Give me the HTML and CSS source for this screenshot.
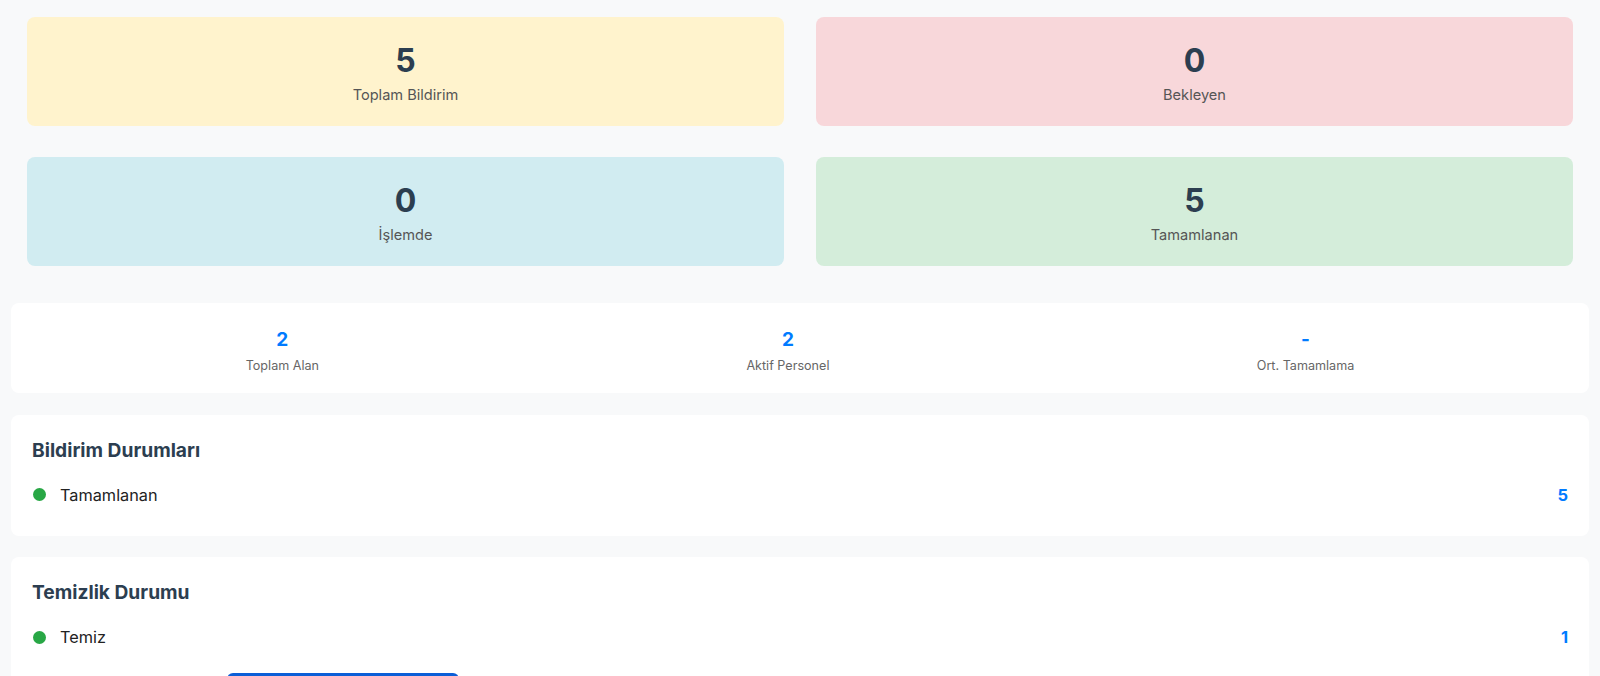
FILE: index.html
```html
<!DOCTYPE html>
<html lang="tr">
<head>
<meta charset="utf-8">
<title>Raporlar</title>
<link rel="stylesheet" href="styles.css">
</head>
<body>
<main class="page">
  <section class="stat-grid">
    <div class="stat-card yellow">
      <div class="stat-num">5</div>
      <div class="stat-label">Toplam Bildirim</div>
    </div>
    <div class="stat-card pink">
      <div class="stat-num">0</div>
      <div class="stat-label">Bekleyen</div>
    </div>
    <div class="stat-card cyan">
      <div class="stat-num">0</div>
      <div class="stat-label">İşlemde</div>
    </div>
    <div class="stat-card green">
      <div class="stat-num">5</div>
      <div class="stat-label">Tamamlanan</div>
    </div>
  </section>

  <section class="panel summary">
    <div class="summary-item">
      <div class="summary-num">2</div>
      <div class="summary-label">Toplam Alan</div>
    </div>
    <div class="summary-item">
      <div class="summary-num">2</div>
      <div class="summary-label">Aktif Personel</div>
    </div>
    <div class="summary-item">
      <div class="summary-num">-</div>
      <div class="summary-label">Ort. Tamamlama</div>
    </div>
  </section>

  <section class="panel list-panel">
    <h3 class="panel-title">Bildirim Durumları</h3>
    <div class="status-row">
      <span class="dot"></span>
      <span class="status-name">Tamamlanan</span>
      <span class="status-count">5</span>
    </div>
  </section>

  <section class="panel list-panel">
    <h3 class="panel-title">Temizlik Durumu</h3>
    <div class="status-row">
      <span class="dot"></span>
      <span class="status-name">Temiz</span>
      <span class="status-count">1</span>
    </div>
    <div class="action-btn"></div>
  </section>
</main>
</body>
</html>
```

FILE: styles.css
```css
* {
  box-sizing: border-box;
}

html, body {
  margin: 0;
  padding: 0;
  background: #f8f9fa;
  font-family: Inter, "Noto Sans", "Liberation Sans", sans-serif;
  overflow: hidden;
}

.page {
  padding: 17px 11px 0;
}

.stat-grid {
  display: grid;
  grid-template-columns: 1fr 1fr;
  column-gap: 32px;
  row-gap: 31px;
  padding: 0 16px;
  margin-bottom: 37px;
}

.stat-card {
  border-radius: 8px;
  padding: 25px 20px 22px;
  text-align: center;
}

.yellow { background: #fff3cd; }
.pink { background: #f8d7da; }
.cyan { background: #d1ecf1; }
.green { background: #d4edda; }

.stat-num {
  font-size: 32px;
  line-height: 38px;
  font-weight: 700;
  color: #2c3e50;
  margin-bottom: 6px;
}

.stat-label {
  font-size: 14.6px;
  line-height: 18px;
  color: #555;
}

.panel {
  background: #fff;
  border-radius: 8px;
  margin-bottom: 21.5px;
}

.summary {
  display: flex;
  justify-content: space-around;
  padding: 26px 21px 20px;
  text-align: center;
}

.summary-num {
  font-size: 19px;
  line-height: 22px;
  font-weight: 700;
  color: #007bff;
  margin-bottom: 7px;
}

.summary-label {
  font-size: 12.6px;
  line-height: 15px;
  color: #666;
}

.list-panel {
  padding: 24px 21px 21px;
}

.panel-title {
  margin: 0 0 14px;
  font-size: 19.2px;
  line-height: 22px;
  font-weight: 700;
  color: #2c3e50;
}

.status-row {
  display: flex;
  align-items: center;
  padding: 10px 0;
}

.dot {
  width: 13px;
  height: 13px;
  border-radius: 50%;
  background: #28a745;
  margin: 0 14px 0 1px;
  flex: none;
}

.status-name {
  flex: 1;
  font-size: 16.3px;
  line-height: 20px;
  color: #222;
}

.status-count {
  font-size: 16.5px;
  line-height: 20px;
  font-weight: 700;
  color: #007bff;
}

.action-btn {
  margin: 15.5px 0 0 195px;
  width: 232px;
  height: 40px;
  border-radius: 6px;
  background: #0b5ed7;
}
```
